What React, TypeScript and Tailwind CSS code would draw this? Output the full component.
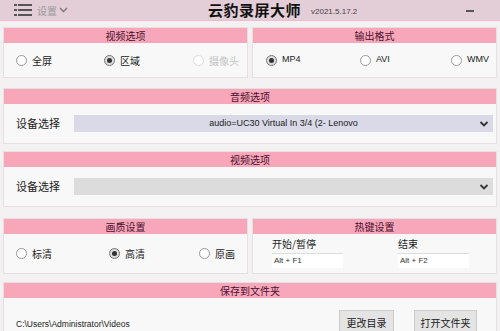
import React from 'react';

const cjk = { fontFamily: '"Noto Sans CJK SC", "Noto Sans", sans-serif' };
const latin = { fontFamily: '"Liberation Sans", "Noto Sans CJK SC", sans-serif' };

function Radio({ label, checked, disabled }: { label: string; checked?: boolean; disabled?: boolean }) {
  return (
    <div className={`flex items-center gap-[5px] ${disabled ? 'text-[#c4c4c4]' : 'text-[#222]'}`}>
      <span
        className={`flex h-[11px] w-[11px] items-center justify-center rounded-full border ${
          disabled ? 'border-[#dcdcdc] bg-white' : checked ? 'border-[#777] bg-[#dcdcdc]' : 'border-[#999] bg-white'
        }`}
      >
        {checked && <span className="h-[5px] w-[5px] rounded-full bg-[#333]" />}
      </span>
      <span>{label}</span>
    </div>
  );
}

function Header({ title }: { title: string }) {
  return (
    <div className="flex h-[15px] items-center justify-center bg-[#f7a7b9] text-[10px] leading-none text-[#4a1030]">
      {title}
    </div>
  );
}

function Panel({ title, className, children }: { title: string; className?: string; children: React.ReactNode }) {
  return (
    <div className={`flex flex-col border border-[#e6e0e2] bg-[#f8f8f8] ${className ?? ''}`}>
      <Header title={title} />
      {children}
    </div>
  );
}

function Chevron() {
  return (
    <svg width="10" height="8" viewBox="0 0 10 8" className="absolute right-[4px] top-1/2 -translate-y-1/2">
      <path d="M1.5 2 L5 5.5 L8.5 2" fill="none" stroke="#333" strokeWidth="1.8" />
    </svg>
  );
}

export default function App() {
  return (
    <div className="h-[331px] w-[500px] overflow-hidden bg-[#f4f1f2]" style={cjk}>
      {/* title bar */}
      <div className="flex h-[20px] items-center bg-[#e3cdd7] px-[14px]">
        <svg width="18" height="14" viewBox="0 0 18 14">
          <rect x="0" y="1" width="3" height="2" fill="#555" />
          <rect x="4" y="1" width="14" height="2" fill="#555" />
          <rect x="0" y="6" width="3" height="2" fill="#555" />
          <rect x="4" y="6" width="14" height="2" fill="#555" />
          <rect x="0" y="11" width="3" height="2" fill="#555" />
          <rect x="4" y="11" width="14" height="2" fill="#555" />
        </svg>
        <div className="ml-[5px] flex items-center gap-[2px] text-[10px] text-[#999]">
          <span>设置</span>
          <svg width="9" height="6" viewBox="0 0 9 6">
            <path d="M1 1 L4.5 4.5 L8 1" fill="none" stroke="#777" strokeWidth="1.4" />
          </svg>
        </div>
        <div className="ml-[140px] flex items-center gap-[10px]">
          <span className="text-[15px] font-bold leading-[20px] tracking-[0.5px] text-[#111]">云豹录屏大师</span>
          <span className="mt-[3px] text-[8px] leading-[10px] text-[#444]" style={latin}>
            v2021.5.17.2
          </span>
        </div>
        <span className="ml-auto mr-[12px] mt-[2px] h-[2px] w-[8px] bg-[#555]" />
      </div>
      <div className="h-[1px] bg-[#f0bccb]" />

      <div className="flex flex-col px-[3px] pt-[6px]">
        {/* row 1 */}
        <div className="flex gap-[4px]">
          <Panel title="视频选项" className="w-[245px]">
            <div className="flex h-[34px] items-center pl-[12px] text-[10px]">
              <div className="w-[88px]"><Radio label="全屏" /></div>
              <div className="w-[89px]"><Radio label="区域" checked /></div>
              <Radio label="摄像头" disabled />
            </div>
          </Panel>
          <Panel title="输出格式" className="w-[245px]">
            <div className="flex h-[34px] items-center pl-[13px] text-[9px]" style={latin}>
              <div className="w-[94px]"><Radio label="MP4" checked /></div>
              <div className="w-[91px]"><Radio label="AVI" /></div>
              <Radio label="WMV" />
            </div>
          </Panel>
        </div>

        {/* audio */}
        <Panel title="音频选项" className="mt-[10px]">
          <div className="flex h-[39px] items-center pl-[12px] pr-[3px]">
            <span className="w-[58px] text-[11px] text-[#222]">设备选择</span>
            <div className="relative flex h-[17px] flex-1 items-center justify-center bg-[#d9d9e7] text-[9px] text-[#222]" style={latin}>
              audio=UC30 Virtual In 3/4 (2- Lenovo
              <Chevron />
            </div>
          </div>
        </Panel>

        {/* video */}
        <Panel title="视频选项" className="mt-[7px]">
          <div className="flex h-[39px] items-center pl-[12px] pr-[3px]">
            <span className="w-[58px] text-[11px] text-[#222]">设备选择</span>
            <div className="relative h-[17px] flex-1 bg-[#dcdcdc]">
              <Chevron />
            </div>
          </div>
        </Panel>

        {/* row 4 */}
        <div className="mt-[11px] flex gap-[4px]">
          <Panel title="画质设置" className="w-[245px]">
            <div className="flex h-[39px] items-center pl-[12px] text-[10px]">
              <div className="w-[93px]"><Radio label="标清" /></div>
              <div className="w-[90px]"><Radio label="高清" checked /></div>
              <Radio label="原画" />
            </div>
          </Panel>
          <Panel title="热键设置" className="w-[245px]">
            <div className="flex h-[39px] gap-[55px] pl-[19px] pt-[3px]">
              <div className="flex w-[71px] flex-col">
                <span className="text-[10px] leading-[14px] text-[#222]">开始/暂停</span>
                <div className="mt-[2px] border-t border-[#ddd] bg-white px-[2px] text-[8px] leading-[14px] text-[#333]" style={latin}>
                  Alt + F1
                </div>
              </div>
              <div className="flex w-[71px] flex-col">
                <span className="text-[10px] leading-[14px] text-[#222]">结束</span>
                <div className="mt-[2px] border-t border-[#ddd] bg-white px-[2px] text-[8px] leading-[14px] text-[#333]" style={latin}>
                  Alt + F2
                </div>
              </div>
            </div>
          </Panel>
        </div>

        {/* save folder */}
        <Panel title="保存到文件夹" className="mt-[8px]">
          <div className="flex h-[40px] items-center pl-[12px]">
            <span className="w-[290px] border-b border-[#e2e2e2] pt-[12px] text-[8.5px] leading-[14px] text-[#222]" style={latin}>
              C:\Users\Administrator\Videos
            </span>
            <button className="ml-[33px] mt-[8px] h-[24px] w-[55px] border border-[#ccc] bg-[#e4e4e4] text-[10px] text-[#222]">
              更改目录
            </button>
            <button className="ml-[20px] mt-[8px] h-[24px] w-[63px] border border-[#ccc] bg-[#e4e4e4] text-[10px] text-[#222]">
              打开文件夹
            </button>
          </div>
        </Panel>
      </div>
    </div>
  );
}
